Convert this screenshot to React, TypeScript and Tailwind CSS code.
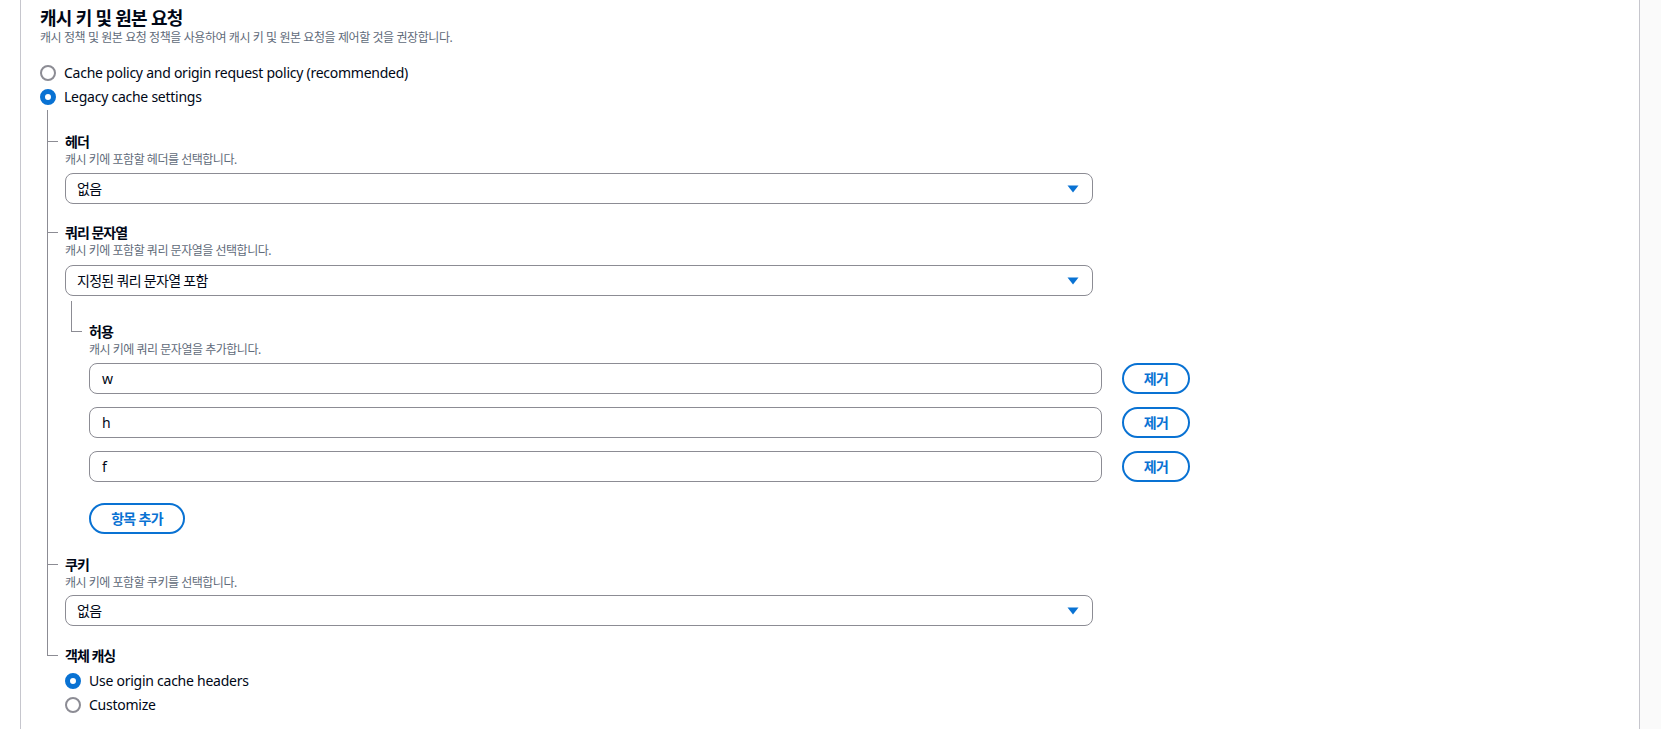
import React from 'react';

const KO = "font-['Noto_Sans','Noto_Sans_CJK_KR',sans-serif]";

const Radio = ({ checked, label }: { checked?: boolean; label: string }) => (
  <div className="flex h-[20px] items-center">
    <span
      className={
        checked
          ? 'h-4 w-4 shrink-0 rounded-full border-[5px] border-[#0972d3] bg-white'
          : 'h-4 w-4 shrink-0 rounded-full border-2 border-[#8c8c94] bg-white'
      }
    />
    <span className="ml-[8px] text-[14px] leading-[20px] tracking-[-0.018em] text-[#000716]">{label}</span>
  </div>
);

const Caret = () => (
  <svg width="12" height="8" viewBox="0 0 12 8" className="shrink-0">
    <path d="M0.5 0.5h11L6 7.5z" fill="#0972d3" />
  </svg>
);

const Select = ({ value, className }: { value: string; className: string }) => (
  <div
    className={`flex h-[31px] w-[1028px] items-center justify-between rounded-lg border border-[#8c8c94] pl-[11px] pr-[13px] ${className}`}
  >
    <span className="text-[14px] tracking-[-0.05em] text-[#000716]">{value}</span>
    <Caret />
  </div>
);

const Label = ({ title, desc }: { title: string; desc: string }) => (
  <div>
    <div className="text-[14px] font-bold leading-[20px] tracking-[-0.07em] text-[#000716]">{title}</div>
    <div className="text-[12px] leading-[16px] tracking-[-0.04em] text-[#5f6b7a]">{desc}</div>
  </div>
);

const TreeItem = ({
  elbow,
  pad,
  last,
  children,
}: {
  elbow: string;
  pad: string;
  last?: boolean;
  children: React.ReactNode;
}) => (
  <div className="flex">
    <div className="flex w-[11px] shrink-0 flex-col">
      <div className={`border-b border-l border-[#8c8c94] ${elbow}`} />
      {!last && <div className="flex-1 border-l border-[#8c8c94]" />}
    </div>
    <div className={`ml-[7px] flex-1 ${pad}`}>{children}</div>
  </div>
);

const ValueRow = ({ value }: { value: string }) => (
  <div className="flex items-center gap-[20px]">
    <div className="flex h-[31px] w-[1013px] items-center rounded-lg border border-[#8c8c94] pl-[12px] text-[14px] text-[#000716]">
      {value}
    </div>
    <button className="h-[31px] w-[68px] rounded-full border-2 border-[#0972d3] text-[14px] font-bold tracking-[-0.05em] text-[#0972d3]">
      제거
    </button>
  </div>
);

export default function App() {
  return (
    <div className={`flex min-h-screen bg-[#fafafa] ${KO}`}>
      <div className="w-[20px] shrink-0 bg-white" />
      <div className="w-[1620px] shrink-0 border-x border-[#c6c6cd] bg-white pb-[20px] pl-[19px] pt-[7px]">
        <h2 className="text-[18px] font-bold leading-[22px] tracking-[-0.04em] text-[#000716]">
          캐시 키 및 원본 요청
        </h2>
        <p className="mt-[1px] text-[12px] leading-[16px] tracking-[-0.035em] text-[#5f6b7a]">
          캐시 정책 및 원본 요청 정책을 사용하여 캐시 키 및 원본 요청을 제어할 것을 권장합니다.
        </p>

        <div className="mt-[17px] flex flex-col gap-[4px]">
          <Radio label="Cache policy and origin request policy (recommended)" />
          <Radio checked label="Legacy cache settings" />
        </div>

        <div className="ml-[7px] mt-[3px]">
          <TreeItem elbow="h-[32px]" pad="pt-[22px]">
            <Label title="헤더" desc="캐시 키에 포함할 헤더를 선택합니다." />
            <Select value="없음" className="mt-[5px]" />
          </TreeItem>

          <TreeItem elbow="h-[29px]" pad="pt-[19px]">
            <Label title="쿼리 문자열" desc="캐시 키에 포함할 쿼리 문자열을 선택합니다." />
            <Select value="지정된 쿼리 문자열 포함" className="mt-[6px]" />

            <div className="ml-[6px] mt-[5px]">
              <TreeItem elbow="h-[31px]" pad="pt-[21px]" last>
                <Label title="허용" desc="캐시 키에 쿼리 문자열을 추가합니다." />
                <div className="mt-[5px] flex flex-col gap-[13px]">
                  <ValueRow value="w" />
                  <ValueRow value="h" />
                  <ValueRow value="f" />
                </div>
                <button className="mt-[21px] h-[31px] w-[96px] rounded-full border-2 border-[#0972d3] text-[14px] font-bold tracking-[-0.05em] text-[#0972d3]">
                  항목 추가
                </button>
              </TreeItem>
            </div>
          </TreeItem>

          <TreeItem elbow="h-[31px]" pad="pt-[21px]">
            <Label title="쿠키" desc="캐시 키에 포함할 쿠키를 선택합니다." />
            <Select value="없음" className="mt-[4px]" />
          </TreeItem>

          <TreeItem elbow="h-[30px]" pad="pt-[20px]" last>
            <div className="text-[14px] font-bold leading-[20px] tracking-[-0.07em] text-[#000716]">객체 캐싱</div>
            <div className="mt-[5px] flex flex-col gap-[4px]">
              <Radio checked label="Use origin cache headers" />
              <Radio label="Customize" />
            </div>
          </TreeItem>
        </div>
      </div>
      <div className="flex-1" />
    </div>
  );
}
